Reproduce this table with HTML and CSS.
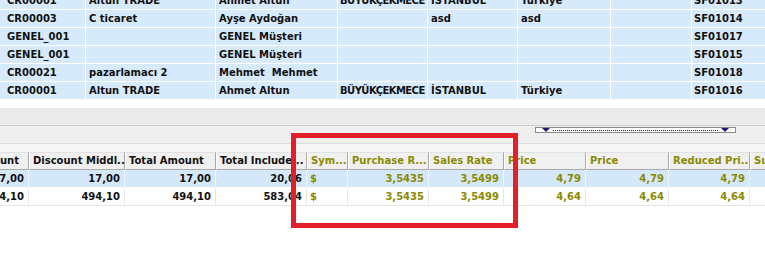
FILE: index.html
```html
<!DOCTYPE html>
<html>
<head>
<meta charset="utf-8">
<link rel="stylesheet" href="styles.css">
</head>
<body>
<div class="page">
  <div class="top-wrap">
    <table class="grid-top">
      <colgroup>
        <col style="width:86px"><col style="width:130px"><col style="width:122px"><col style="width:90px"><col style="width:90px"><col style="width:93px"><col style="width:81px"><col style="width:73px">
      </colgroup>
      <tr><td class="first">CR00001</td><td>Altun TRADE</td><td>Ahmet Altun</td><td class="tight">BÜYÜKÇEKMECE</td><td>İSTANBUL</td><td>Türkiye</td><td></td><td>SF01013</td></tr>
      <tr><td class="first">CR00003</td><td>C ticaret</td><td>Ayşe Aydoğan</td><td></td><td>asd</td><td>asd</td><td></td><td>SF01014</td></tr>
      <tr><td class="first">GENEL_001</td><td></td><td>GENEL Müşteri</td><td></td><td></td><td></td><td></td><td>SF01017</td></tr>
      <tr><td class="first">GENEL_001</td><td></td><td>GENEL Müşteri</td><td></td><td></td><td></td><td></td><td>SF01015</td></tr>
      <tr><td class="first">CR00021</td><td>pazarlamacı 2</td><td>Mehmet&nbsp; Mehmet</td><td></td><td></td><td></td><td></td><td>SF01018</td></tr>
      <tr><td class="first">CR00001</td><td>Altun TRADE</td><td>Ahmet Altun</td><td class="tight">BÜYÜKÇEKMECE</td><td>İSTANBUL</td><td>Türkiye</td><td></td><td>SF01016</td></tr>
    </table>
  </div>
  <div class="gap"></div>
  <div class="band band-a"></div>
  <div class="band band-b">
    <div class="dropdown">
      <span class="tri"></span>
      <span class="dots"></span>
      <span class="tri"></span>
    </div>
  </div>
  <div class="band band-c"></div>
  <div class="bottom-wrap">
    <table class="grid-bottom">
      <colgroup>
        <col style="width:70px"><col style="width:96px"><col style="width:91px"><col style="width:91px"><col style="width:41px"><col style="width:81px"><col style="width:75px"><col style="width:82px"><col style="width:83px"><col style="width:81px"><col style="width:80px">
      </colgroup>
      <tr class="head">
        <th class="clip-left">Amount</th>
        <th>Discount Middl...</th>
        <th>Total Amount</th>
        <th>Total Include...</th>
        <th class="ol">Sym...</th>
        <th class="ol">Purchase R...</th>
        <th class="ol">Sales Rate</th>
        <th class="ol">Price</th>
        <th class="ol">Price</th>
        <th class="ol">Reduced Pri...</th>
        <th class="ol">Su</th>
      </tr>
      <tr class="sel">
        <td class="num">17,00</td>
        <td class="num">17,00</td>
        <td class="num">17,00</td>
        <td class="num">20,06</td>
        <td class="ol">$</td>
        <td class="num ol">3,5435</td>
        <td class="num ol">3,5499</td>
        <td class="num ol">4,79</td>
        <td class="num ol">4,79</td>
        <td class="num ol">4,79</td>
        <td></td>
      </tr>
      <tr>
        <td class="num">494,10</td>
        <td class="num">494,10</td>
        <td class="num">494,10</td>
        <td class="num">583,04</td>
        <td class="ol">$</td>
        <td class="num ol">3,5435</td>
        <td class="num ol">3,5499</td>
        <td class="num ol">4,64</td>
        <td class="num ol">4,64</td>
        <td class="num ol">4,64</td>
        <td></td>
      </tr>
    </table>
  </div>
  <div class="highlight"></div>
</div>
</body>
</html>
```

FILE: styles.css
```css
html, body {
  margin: 0;
  padding: 0;
  background: #ffffff;
}
.page {
  position: relative;
  width: 765px;
  height: 254px;
  overflow: hidden;
  font-family: "DejaVu Sans", Tahoma, sans-serif;
  font-size: 10px;
  font-weight: bold;
  color: #111111;
}
table {
  border-collapse: separate;
  border-spacing: 0;
  table-layout: fixed;
}
.top-wrap {
  margin-top: -8px;
}
.grid-top {
  width: 765px;
}
.grid-top td {
  height: 17px;
  padding: 0 0 0 3px;
  background: #d7eafb;
  border-right: 1px solid #ffffff;
  border-bottom: 1px solid #ffffff;
  white-space: nowrap;
  overflow: hidden;
  line-height: 17px;
}
.grid-top td.first {
  padding-left: 7px;
}
.grid-top td.tight {
  letter-spacing: -0.55px;
  padding-left: 2px;
}
.grid-top td:last-child {
  padding-left: 2px;
  border-right: none;
}
.gap {
  height: 8px;
}
.band-a {
  height: 17px;
  background: #ebebeb;
  border-bottom: 1px solid #cdcdcd;
}
.band-b {
  height: 17px;
  background: #efefef;
  border-bottom: 1px solid #dedede;
  position: relative;
}
.band-c {
  height: 8px;
  background: #f6f6f6;
}
.dropdown {
  position: absolute;
  left: 535px;
  top: 1px;
  width: 187px;
  height: 4px;
  border: 1px solid #8a8a8a;
  background: #ffffff;
  display: flex;
  align-items: center;
  padding: 0 6px 0 6px;
  box-sizing: content-box;
}
.dropdown .tri {
  width: 0;
  height: 0;
  border-left: 4px solid transparent;
  border-right: 4px solid transparent;
  border-top: 4px solid #1c1c6e;
  flex: none;
}
.dropdown .dots {
  flex: 1;
  height: 0;
  margin: 0 3px;
  border-top: 1px dotted #1c1c6e;
}
.bottom-wrap {
  margin-left: -41px;
}
.grid-bottom {
  width: 871px;
}
.grid-bottom th {
  height: 16px;
  padding: 0 0 0 3px;
  text-align: left;
  background: #f0f0f0;
  border-top: 1px solid #e2e2e2;
  border-left: 1px solid #ffffff;
  border-right: 1px solid #a9a9a9;
  border-bottom: 1px solid #a9a9a9;
  white-space: nowrap;
  overflow: hidden;
  line-height: 16px;
}
.grid-bottom th.clip-left {
  text-align: right;
  padding-right: 9px;
}
.grid-bottom td {
  height: 17px;
  padding: 0 4px 0 3px;
  border-right: 1px solid #e6e6e6;
  border-bottom: 1px solid #e6e6e6;
  white-space: nowrap;
  overflow: hidden;
  line-height: 17px;
  background: #ffffff;
}
.grid-bottom tr.sel td {
  background: #d5e8f9;
  border-right-color: #eef5fc;
  border-bottom-color: #ffffff;
}
.grid-bottom td.num {
  text-align: right;
}
.ol {
  color: #8a8a00;
}
.highlight {
  position: absolute;
  left: 291px;
  top: 133px;
  width: 217px;
  height: 85px;
  border: 5px solid #e3202a;
}
```
